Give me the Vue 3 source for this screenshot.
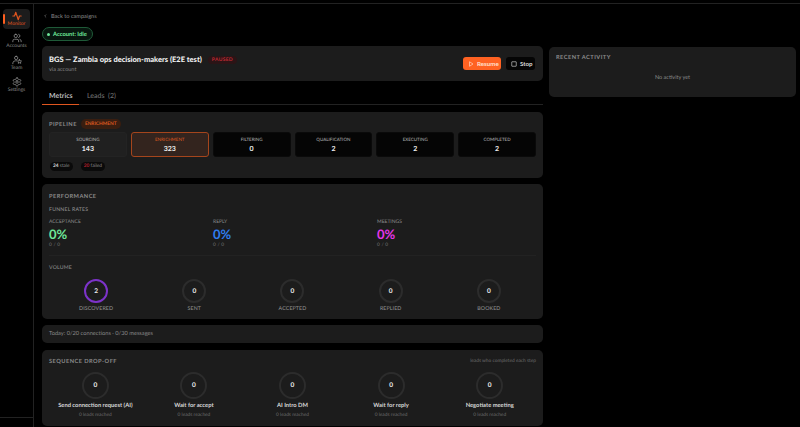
<template>
  <div class="app">
    <aside class="sidebar">
      <div
        v-for="item in navItems"
        :key="item.label"
        class="nav-item"
        :class="{ active: item.active }"
      >
        <svg viewBox="0 0 24 24" class="nav-icon">
          <path v-for="d in item.paths" :key="d" :d="d" />
        </svg>
        <span>{{ item.label }}</span>
      </div>
      <div class="sidebar-foot"></div>
    </aside>

    <main class="main">
      <div class="left">
        <div class="back">
          <svg viewBox="0 0 24 24" class="back-icon"><path d="M15 5l-7 7 7 7" /></svg>
          Back to campaigns
        </div>
        <div class="account-pill"><i class="dot"></i>Account: Idle</div>

        <section class="card header-card">
          <div>
            <div class="title-row">
              <h1>BGS — Zambia ops decision-makers (E2E test)</h1>
              <span class="paused">PAUSED</span>
            </div>
            <div class="via">via account</div>
          </div>
          <div class="actions">
            <button class="btn resume">
              <svg viewBox="0 0 24 24"><path d="M6 3l14 9-14 9z" /></svg>
              Resume
            </button>
            <button class="btn stop">
              <svg viewBox="0 0 24 24"><rect x="3" y="3" width="18" height="18" rx="1" /></svg>
              Stop
            </button>
          </div>
        </section>

        <nav class="tabs">
          <span class="tab on">Metrics</span>
          <span class="tab">Leads&nbsp; (2)</span>
        </nav>

        <section class="card pipeline">
          <div class="pipe-head">
            <span class="section-title">PIPELINE</span>
            <span class="stage-badge">ENRICHMENT</span>
          </div>
          <div class="stages">
            <div
              v-for="s in stages"
              :key="s.name"
              class="stage"
              :class="s.kind"
            >
              <span class="stage-name">{{ s.name }}</span>
              <b>{{ s.value }}</b>
            </div>
          </div>
          <div class="chips">
            <span class="chip"><b>24</b> stale</span>
            <span class="chip"><b class="red">20</b> failed</span>
          </div>
        </section>

        <section class="card perf">
          <div class="section-title">PERFORMANCE</div>
          <div class="sub-title funnel-title">FUNNEL RATES</div>
          <div class="rates">
            <div v-for="r in rates" :key="r.name" class="rate">
              <div class="rate-name">{{ r.name }}</div>
              <div class="rate-value" :class="r.color">0%</div>
              <div class="rate-count">0 / 0</div>
            </div>
          </div>
          <div class="divider"></div>
          <div class="sub-title">VOLUME</div>
          <div class="volume">
            <div v-for="v in volume" :key="v.name" class="vol">
              <div class="ring small" :class="{ purple: v.value > 0 }">{{ v.value }}</div>
              <span>{{ v.name }}</span>
            </div>
          </div>
        </section>

        <section class="card today">Today: 0/20 connections · 0/30 messages</section>

        <section class="card dropoff">
          <div class="drop-head">
            <span class="section-title">SEQUENCE DROP-OFF</span>
            <span class="drop-note">leads who completed each step</span>
          </div>
          <div class="steps">
            <div v-for="s in steps" :key="s" class="step">
              <div class="ring big">0</div>
              <div class="step-name">{{ s }}</div>
              <div class="step-sub">0 leads reached</div>
            </div>
          </div>
        </section>
      </div>

      <aside class="right">
        <section class="card activity">
          <div class="section-title">RECENT ACTIVITY</div>
          <div class="empty">No activity yet</div>
        </section>
      </aside>
    </main>
  </div>
</template>

<script setup>
const navItems = [
  { label: 'Monitor', active: true, paths: ['M2 12h4l3-9 6 18 3-9h4'] },
  {
    label: 'Accounts',
    paths: [
      'M16 21v-2a4 4 0 0 0-4-4H6a4 4 0 0 0-4 4v2',
      'M9 3a4 4 0 1 0 0 8 4 4 0 0 0 0-8z',
      'M22 21v-2a4 4 0 0 0-3-3.870',
      'M16 3.130a4 4 0 0 1 0 7.750'
    ]
  },
  {
    label: 'Team',
    paths: [
      'M10 3a4 4 0 1 0 0 8 4 4 0 0 0 0-8z',
      'M2 21v-2a6 6 0 0 1 6-5h3',
      'M18 11l1.500 3 3.300.5-2.400 2.300.6 3.200-3-1.500-3 1.500.6-3.200-2.400-2.300 3.300-.5z'
    ]
  },
  {
    label: 'Settings',
    paths: [
      'M12 9a3 3 0 1 0 0 6 3 3 0 0 0 0-6z',
      'M12.220 2h-.44a2 2 0 0 0-2 2v.18a2 2 0 0 1-1 1.730l-.43.25a2 2 0 0 1-2 0l-.15-.08a2 2 0 0 0-2.730.73l-.22.38a2 2 0 0 0 .73 2.730l.15.1a2 2 0 0 1 1 1.720v.51a2 2 0 0 1-1 1.740l-.15.09a2 2 0 0 0-.73 2.730l.22.38a2 2 0 0 0 2.730.73l.15-.08a2 2 0 0 1 2 0l.43.25a2 2 0 0 1 1 1.730V20a2 2 0 0 0 2 2h.44a2 2 0 0 0 2-2v-.18a2 2 0 0 1 1-1.730l.43-.25a2 2 0 0 1 2 0l.15.08a2 2 0 0 0 2.730-.73l.22-.39a2 2 0 0 0-.73-2.730l-.15-.08a2 2 0 0 1-1-1.740v-.5a2 2 0 0 1 1-1.740l.15-.09a2 2 0 0 0 .73-2.730l-.22-.38a2 2 0 0 0-2.730-.73l-.15.08a2 2 0 0 1-2 0l-.43-.25a2 2 0 0 1-1-1.730V4a2 2 0 0 0-2-2z'
    ]
  }
]

const stages = [
  { name: 'SOURCING', value: 143, kind: 'done' },
  { name: 'ENRICHMENT', value: 323, kind: 'current' },
  { name: 'FILTERING', value: 0, kind: '' },
  { name: 'QUALIFICATION', value: 2, kind: '' },
  { name: 'EXECUTING', value: 2, kind: '' },
  { name: 'COMPLETED', value: 2, kind: '' }
]

const rates = [
  { name: 'ACCEPTANCE', color: 'green' },
  { name: 'REPLY', color: 'blue' },
  { name: 'MEETINGS', color: 'pink' }
]

const volume = [
  { name: 'DISCOVERED', value: 2 },
  { name: 'SENT', value: 0 },
  { name: 'ACCEPTED', value: 0 },
  { name: 'REPLIED', value: 0 },
  { name: 'BOOKED', value: 0 }
]

const steps = [
  'Send connection request (AI)',
  'Wait for accept',
  'AI Intro DM',
  'Wait for reply',
  'Negotiate meeting'
]
</script>

<style>
html,
body {
  margin: 0;
  background: #000;
}
</style>

<style scoped>
.app {
  display: flex;
  width: 800px;
  height: 424px;
  margin-top: 3px;
  overflow: hidden;
  box-sizing: border-box;
  background: #000;
  color: #fff;
  font-family: Lato, "Liberation Sans", sans-serif;
  text-rendering: geometricPrecision;
  border-top: 1px solid #222;
}

.sidebar {
  position: relative;
  flex: none;
  width: 34px;
  box-sizing: border-box;
  border-right: 1px solid #222;
  padding: 5px 3px 0;
  display: flex;
  flex-direction: column;
  align-items: center;
}

.nav-item {
  position: relative;
  width: 27px;
  height: 20px;
  margin-bottom: 2px;
  padding-top: 2px;
  box-sizing: border-box;
  display: flex;
  flex-direction: column;
  align-items: center;
  color: #8a8a8a;
  font-size: 5px;
  border-radius: 4px;
}

.nav-item span {
  line-height: 6px;
}

.nav-item.active {
  background: #1c1c1c;
  color: #e0551f;
}

.nav-item.active::before {
  content: "";
  position: absolute;
  left: 0;
  top: 5px;
  width: 2px;
  height: 10px;
  background: #ff5f1f;
  border-radius: 1px;
}

.nav-icon {
  flex: none;
  width: 10px;
  height: 10px;
  fill: none;
  stroke: currentColor;
  stroke-width: 2;
  stroke-linejoin: round;
  stroke-linecap: round;
}

.nav-item.active .nav-icon {
  stroke-width: 2.800;
}

.sidebar-foot {
  position: absolute;
  left: 0;
  right: 0;
  top: 413px;
  border-top: 1px solid #222;
}

.main {
  flex: 1;
  min-width: 0;
  display: flex;
  gap: 6px;
  padding: 8px 4px 0 8px;
}

.left {
  flex: none;
  width: 501px;
}

.right {
  flex: 1;
  min-width: 0;
  padding-top: 35px;
}

.back {
  display: flex;
  align-items: center;
  gap: 3px;
  height: 8px;
  color: #8c8c8c;
  font-size: 5.600px;
  padding-left: 1px;
}

.back-icon {
  width: 5px;
  height: 6px;
  fill: none;
  stroke: #999;
  stroke-width: 2.500;
}

.account-pill {
  display: inline-flex;
  align-items: center;
  gap: 3px;
  height: 12px;
  margin-top: 7px;
  padding: 0 5px 0 4px;
  border: 1px solid #1f5a38;
  border-radius: 7px;
  background: #07160e;
  color: #6ee79a;
  font-size: 5.800px;
  font-weight: 700;
  vertical-align: top;
}

.dot {
  width: 3px;
  height: 3px;
  border-radius: 50%;
  background: #6ee79a;
}

.card {
  background: #1c1c1c;
  border-radius: 5px;
  box-sizing: border-box;
}

.header-card {
  display: flex;
  justify-content: space-between;
  align-items: center;
  height: 35px;
  margin-top: 5px;
  padding: 0 8px 0 7px;
}

.title-row {
  display: flex;
  align-items: center;
  gap: 6px;
}

h1 {
  margin: 0;
  font-size: 7.500px;
  font-weight: 900;
  color: #f0f0f0;
  line-height: 11px;
}

.paused {
  padding: 1px 4px;
  border-radius: 5px;
  background: #2b1416;
  color: #c22a34;
  font-size: 5px;
  font-weight: 700;
  letter-spacing: 0.3px;
}

.via {
  margin-top: 2px;
  font-size: 5.500px;
  color: #858585;
}

.actions {
  display: flex;
  gap: 5px;
}

.btn {
  display: flex;
  align-items: center;
  gap: 3px;
  height: 13px;
  border: 0;
  border-radius: 3px;
  font-family: inherit;
  font-size: 6.200px;
  font-weight: 700;
  padding: 0 3px 0 5px;
}

.btn svg {
  flex: none;
  width: 6px;
  height: 6px;
  fill: none;
  stroke: currentColor;
  stroke-width: 2.500;
}

.resume {
  width: 38px;
  background: #ff6222;
  color: #ffe0d0;
}

.stop {
  width: 29px;
  background: #050505;
  color: #d8d8d8;
}

.tabs {
  display: flex;
  height: 24px;
  margin-bottom: 7px;
  border-bottom: 1px solid #222;
  box-sizing: border-box;
}

.tab {
  height: 24px;
  box-sizing: border-box;
  padding: 9px 7px 0;
  font-size: 7px;
  line-height: 12px;
  color: #6f6f6f;
  font-weight: 500;
}

.tab.on {
  width: 37px;
  padding-right: 0;
  margin-right: 1px;
  color: #bdbdbd;
  font-weight: 700;
  border-bottom: 1px solid #e0561f;
}

.section-title {
  font-size: 5.700px;
  font-weight: 700;
  letter-spacing: 0.45px;
  color: #8a8a8a;
}

.pipeline {
  height: 66px;
  padding: 8px 7px 0;
}

.pipe-head {
  display: flex;
  align-items: center;
  gap: 4px;
  height: 8px;
}

.stage-badge {
  padding: 2px 4px;
  border-radius: 5px;
  background: #3a1e10;
  color: #dc5a20;
  font-size: 4.800px;
  font-weight: 700;
}

.stages {
  display: grid;
  grid-template-columns: repeat(6, 1fr);
  gap: 4px;
  margin-top: 4px;
}

.stage {
  height: 25px;
  box-sizing: border-box;
  border-radius: 3px;
  background: #050505;
  display: flex;
  flex-direction: column;
  align-items: center;
  padding-top: 4px;
  border: 1px solid #0a0a0a;
}

.stage-name {
  font-size: 4.500px;
  line-height: 6px;
  font-weight: 500;
  color: #a8a8a8;
}

.stage b {
  margin-top: 2px;
  font-size: 7px;
  line-height: 8px;
  color: #eee;
}

.stage.done {
  background: #202020;
  border-color: #232323;
}

.stage.current {
  background: #33241e;
  border-color: #a5451c;
}

.stage.current .stage-name {
  color: #d2551f;
}

.chips {
  display: flex;
  gap: 8px;
  margin: 5px 0 0 1px;
}

.chip {
  height: 9px;
  padding: 0 3px;
  border-radius: 5px;
  background: #0a0a0a;
  color: #8c8c8c;
  font-size: 4.800px;
  line-height: 9px;
}

.chip b {
  color: #ddd;
}

.chip b.red {
  color: #b81f2a;
}

.perf {
  height: 135px;
  margin-top: 6px;
  padding: 9px 7px 0;
}

.perf > .section-title {
  line-height: 7px;
}

.sub-title {
  font-size: 5.200px;
  font-weight: 500;
  letter-spacing: 0.2px;
  line-height: 7px;
  color: #8c8c8c;
}

.funnel-title {
  margin-top: 7px;
}

.rates {
  display: grid;
  grid-template-columns: repeat(3, 164px);
  margin-top: 5px;
}

.rate-name {
  font-size: 5px;
  line-height: 6px;
  color: #8a8a8a;
}

.rate-value {
  font-size: 13px;
  font-weight: 700;
  line-height: 14px;
  margin-top: 2px;
}

.green { color: #6ee79a; }
.blue { color: #2f7df0; }
.pink { color: #e535e8; }

.rate-count {
  font-size: 4.800px;
  line-height: 6px;
  margin-top: 1px;
  color: #767676;
  letter-spacing: 0.2px;
}

.divider {
  height: 1px;
  margin: 7px 0 9px;
  background: #222;
}

.volume {
  display: grid;
  grid-template-columns: repeat(5, 1fr);
  margin: 7px -2px 0;
}

.vol {
  display: flex;
  flex-direction: column;
  align-items: center;
  font-size: 5.300px;
  color: #959595;
}

.vol span {
  margin-top: 3px;
  line-height: 7px;
  letter-spacing: 0.1px;
}

.ring {
  display: flex;
  align-items: center;
  justify-content: center;
  box-sizing: border-box;
  border-radius: 50%;
  border: 2.500px solid #2c2c2c;
  color: #eee;
  font-weight: 700;
}

.ring.small {
  width: 24px;
  height: 24px;
  font-size: 6.500px;
}

.ring.purple {
  border-color: #7c33c9;
}

.ring.big {
  width: 27px;
  height: 27px;
  font-size: 6.500px;
}

.today {
  height: 18px;
  margin-top: 6px;
  padding: 0 7px;
  font-size: 5.700px;
  line-height: 18px;
  color: #8a8a8a;
}

.dropoff {
  height: 76px;
  margin-top: 7px;
  padding: 7px 7px 0;
}

.drop-head {
  display: flex;
  justify-content: space-between;
  align-items: center;
  height: 8px;
}

.drop-note {
  font-size: 4.800px;
  color: #6e6e6e;
}

.steps {
  display: grid;
  grid-template-columns: repeat(5, 1fr);
  margin: 7px -3px 0;
}

.step {
  display: flex;
  flex-direction: column;
  align-items: center;
}

.step-name {
  margin-top: 2px;
  font-size: 5.800px;
  line-height: 9px;
  font-weight: 700;
  color: #d8d8d8;
}

.step-sub {
  margin-top: 2px;
  font-size: 4.800px;
  line-height: 7px;
  color: #6e6e6e;
}

.activity {
  height: 50px;
  padding: 7px 7px 0;
}

.activity .section-title {
  display: block;
  line-height: 8px;
}

.empty {
  margin-top: 13px;
  text-align: center;
  font-size: 5.500px;
  color: #8a8a8a;
}
</style>
